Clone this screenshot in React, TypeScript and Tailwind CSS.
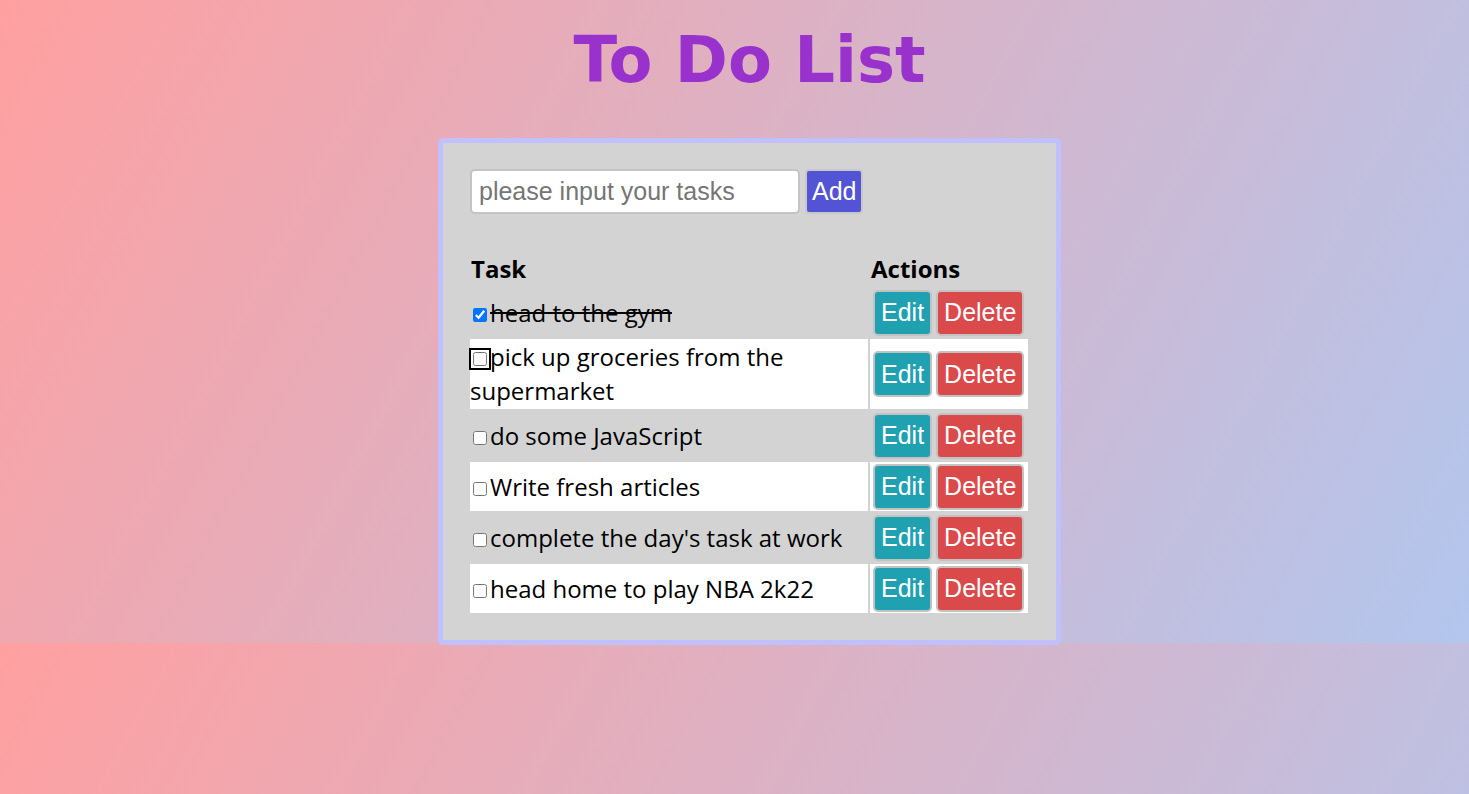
import { useState } from "react";

type Task = { id: number; text: string; done: boolean };

const INITIAL_TASKS: Task[] = [
  { id: 1, text: "head to the gym", done: true },
  { id: 2, text: "pick up groceries from the supermarket", done: false },
  { id: 3, text: "do some JavaScript", done: false },
  { id: 4, text: "Write fresh articles", done: false },
  { id: 5, text: "complete the day's task at work", done: false },
  { id: 6, text: "head home to play NBA 2k22", done: false },
];

const btn =
  "h-[46px] px-[6px] border-2 border-[#c2c2c2] rounded-[5px] text-white text-[25px] leading-none font-['Liberation_Sans',Arial,sans-serif] align-middle";

const App = () => {
  const [tasks, setTasks] = useState<Task[]>(INITIAL_TASKS);
  const [input, setInput] = useState("");

  const toggle = (id: number) =>
    setTasks((prev) => prev.map((t) => (t.id === id ? { ...t, done: !t.done } : t)));

  return (
    <div className="min-h-screen w-full pl-[30px] bg-[linear-gradient(118deg,#ffa0a0,#b3c6ee)] bg-[length:100%_643px] bg-repeat">
      {/* Title */}
      <h1 className="pt-[23px] text-center text-[64px] leading-[75px] font-bold text-[#9932cc] font-['DejaVu_Sans',Verdana,sans-serif]">
        To Do List
      </h1>

      {/* Card */}
      <div className="mx-auto mt-[40px] w-[623px] border-[5px] border-[#c0c0ff] rounded-[5px] bg-[#d3d3d3] px-[25px] pt-[26px] pb-[25px]">
        <form
          className="flex ml-[2px]"
          onSubmit={(e) => {
            e.preventDefault();
            if (!input.trim()) return;
            setTasks((prev) => [...prev, { id: Date.now(), text: input, done: false }]);
            setInput("");
          }}
        >
          <input
            value={input}
            onChange={(e) => setInput(e.target.value)}
            placeholder="please input your tasks"
            className="w-[330px] h-[45px] bg-white border-2 border-[#c4c4c4] rounded-[5px] px-[7px] text-[25px] text-black placeholder:text-[#757575] font-['Liberation_Sans',Arial,sans-serif] outline-none"
          />
          <button
            type="submit"
            className="ml-[5px] h-[45px] px-[5px] bg-[#5353d6] border-2 border-[#c8c8c8] rounded-[4px] text-white text-[25px] font-['Liberation_Sans',Arial,sans-serif]"
          >
            Add
          </button>
        </form>

        <table className="mt-[36px] w-[562px] table-fixed border-separate border-spacing-[2px] text-black font-['Open_Sans',sans-serif] text-[24px]">
          <thead>
            <tr>
              <th className="w-[398px] h-[34px] px-px text-left font-bold leading-[32px]">Task</th>
              <th className="h-[34px] px-px text-left font-bold leading-[32px]">Actions</th>
            </tr>
          </thead>
          <tbody>
            {tasks.map((task, i) => (
              <tr key={task.id} className={i % 2 === 1 ? "bg-white" : ""}>
                <td className="h-[49px] py-px align-middle leading-[34px]">
                  <input
                    type="checkbox"
                    checked={task.done}
                    onChange={() => toggle(task.id)}
                    className={`ml-[3px] mr-[3px] w-[14px] h-[14px] ${
                      task.id === 2 ? "rounded-[4px] outline-2 outline-offset-[2px] outline-black" : ""
                    }`}
                  />
                  <span className={task.done ? "line-through" : ""}>{task.text}</span>
                </td>
                <td className="h-[49px] py-px pl-[3px] align-middle whitespace-nowrap">
                  <button className={`${btn} bg-[#1fa1b1]`}>Edit</button>
                  <button
                    className={`${btn} ml-[4px] bg-[#da4a4b]`}
                    onClick={() => setTasks((prev) => prev.filter((t) => t.id !== task.id))}
                  >
                    Delete
                  </button>
                </td>
              </tr>
            ))}
          </tbody>
        </table>
      </div>
    </div>
  );
};

export default App;
